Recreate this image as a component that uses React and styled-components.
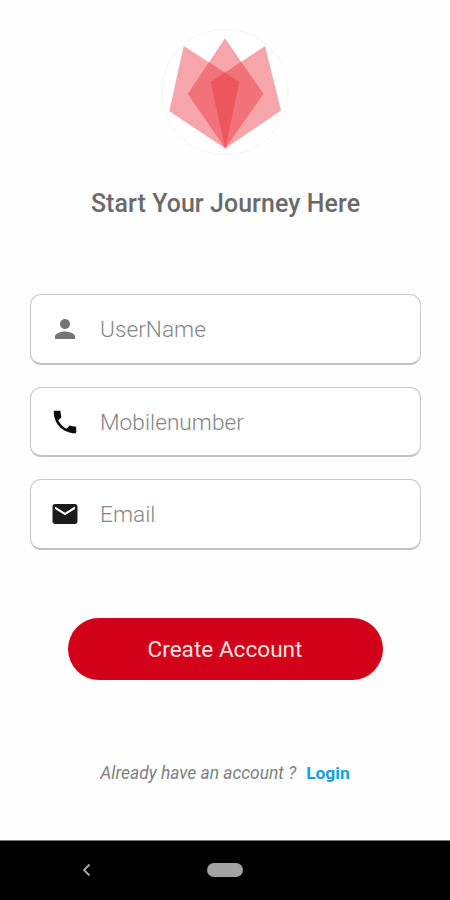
import styled, { createGlobalStyle } from 'styled-components';

const FIELDS = [
  {
    name: 'username',
    placeholder: 'UserName',
    color: '#757575',
    path: 'M12 12c2.21 0 4-1.79 4-4s-1.79-4-4-4-4 1.79-4 4 1.79 4 4 4zm0 2c-2.67 0-8 1.34-8 4v2h16v-2c0-2.66-5.33-4-8-4z',
  },
  {
    name: 'mobile',
    placeholder: 'Mobilenumber',
    color: '#0c0c0c',
    path: 'M6.62 10.79c1.44 2.83 3.76 5.14 6.59 6.59l2.2-2.2c.27-.27.67-.36 1.02-.24 1.12.37 2.33.57 3.57.57.55 0 1 .45 1 1V20c0 .55-.45 1-1 1-9.39 0-17-7.61-17-17 0-.55.45-1 1-1h3.5c.55 0 1 .45 1 1 0 1.25.2 2.45.57 3.57.11.35.03.74-.25 1.02l-2.2 2.2z',
  },
  {
    name: 'email',
    placeholder: 'Email',
    color: '#1b1b1b',
    path: 'M20 4H4c-1.1 0-1.99.9-1.99 2L2 18c0 1.1.9 2 2 2h16c1.1 0 2-.9 2-2V6c0-1.1-.9-2-2-2zm0 4l-8 5-8-5V6l8 5 8-5v2z',
  },
];

const App = () => {
  return (
    <>
      <GlobalStyle />
      <Screen>
        <Logo viewBox='0 0 128 128' aria-hidden='true'>
          <circle cx='64' cy='64' r='63' fill='#fff' stroke='#f5f5f5' />
          <g fill='#e9303a' fillOpacity='0.43'>
            <path d='M22.7 18 L78.5 54 L64.3 120.5 L8.3 83.3 Z' />
            <path d='M104 18 L120 82.5 L64.3 120.5 L49.5 54 Z' />
            <path d='M64 10.3 L102.5 66 L64.3 120.5 L26.7 66 Z' />
          </g>
        </Logo>
        <Title>Start Your Journey Here</Title>

        <Form onSubmit={(e) => e.preventDefault()}>
          {FIELDS.map(({ name, placeholder, color, path }) => (
            <Field key={name}>
              <FieldIcon viewBox='0 0 24 24' $color={color}>
                <path d={path} />
              </FieldIcon>
              <Input name={name} placeholder={placeholder} />
            </Field>
          ))}
          <SubmitButton type='submit'>Create Account</SubmitButton>
        </Form>

        <LoginRow>
          <Question>Already have an account ?</Question>
          <LoginLink>Login</LoginLink>
        </LoginRow>

        <NavBar>
          <BackIcon viewBox='0 0 10 16'>
            <path d='M8.5 2.5 L3 8 L8.5 13.5' />
          </BackIcon>
          <HomePill />
        </NavBar>
      </Screen>
    </>
  );
};

export default App;

const GlobalStyle = createGlobalStyle`
  body {
    margin: 0;
    background-color: #fefefe;
    font-family: Roboto, sans-serif;
  }
`;

const Screen = styled.main`
  display: flex;
  flex-direction: column;
  align-items: center;
  width: 450px;
  height: 900px;
  padding-top: 28px;
  box-sizing: border-box;
  overflow: hidden;
`;

const Logo = styled.svg`
  flex-shrink: 0;
  width: 128px;
  height: 128px;
`;

const Title = styled.h1`
  margin: 33px 0 0 1px;
  font-size: 24.9px;
  font-weight: 500;
  line-height: 30px;
  letter-spacing: 0.1px;
  color: #6a6a6a;
  white-space: nowrap;
`;

const Form = styled.form`
  display: flex;
  flex-direction: column;
  align-items: center;
  gap: 22px;
  margin-top: 75px;
`;

const Field = styled.label`
  display: flex;
  align-items: center;
  gap: 20px;
  width: 391px;
  height: 70.5px;
  padding: 1px 0 0 19.5px;
  border: 1px solid #c9c9c9;
  border-bottom: 2px solid #c2c2c2;
  border-radius: 11px;
  box-sizing: border-box;
  background-color: #fff;
`;

const FieldIcon = styled.svg`
  flex-shrink: 0;
  width: 30px;
  height: 30px;
  fill: ${({ $color }) => $color};
`;

const Input = styled.input`
  width: 290px;
  padding: 1px 0 0;
  border: none;
  outline: none;
  background: none;
  font-family: inherit;
  font-size: 22.6px;
  font-weight: 300;
  letter-spacing: 0.05px;
  color: #666;

  &::placeholder {
    color: #858585;
    opacity: 1;
  }
`;

const SubmitButton = styled.button`
  width: 315px;
  height: 62px;
  margin-top: 46px;
  padding: 0;
  border: none;
  border-radius: 31px;
  background-color: #d20019;
  font-family: inherit;
  font-size: 22.6px;
  line-height: 64px;
  color: #fbe3e0;
  cursor: pointer;
`;

const LoginRow = styled.div`
  display: flex;
  align-items: center;
  gap: 10px;
  margin-top: 82px;
  line-height: 22px;
  white-space: nowrap;
`;

const Question = styled.span`
  font-size: 17.4px;
  font-style: italic;
  color: #808080;
`;

const LoginLink = styled.a`
  font-size: 17.4px;
  font-weight: 700;
  color: #129fe3;
  cursor: pointer;
`;

const NavBar = styled.nav`
  display: grid;
  grid-template-columns: 1fr 36px 1fr;
  align-items: center;
  width: 100%;
  height: 60px;
  margin-top: auto;
  padding-bottom: 1px;
  border-top: 1px solid #777;
  box-sizing: border-box;
  background-color: #000;
`;

const BackIcon = styled.svg`
  width: 10px;
  height: 16px;
  margin-left: 81px;
  fill: none;
  stroke: #aaa;
  stroke-width: 1.8;
`;

const HomePill = styled.span`
  height: 14px;
  border-radius: 7px;
  background-color: #a2a2a2;
`;
